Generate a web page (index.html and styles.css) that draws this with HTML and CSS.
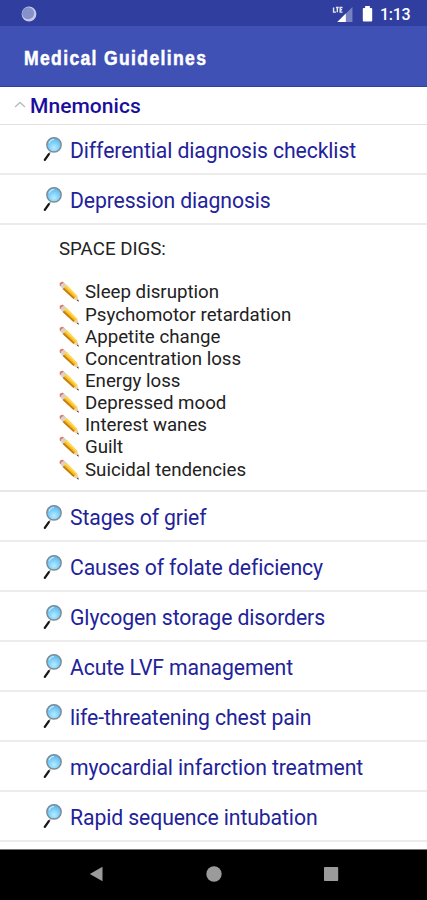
FILE: index.html
```html
<!DOCTYPE html>
<html lang="en">
<head>
<meta charset="utf-8">
<title>Medical Guidelines</title>
<link rel="stylesheet" href="styles.css">
</head>
<body>
<svg class="defs" aria-hidden="true">
  <defs>
    <radialGradient id="glass" cx=".5" cy=".7" r=".65">
      <stop offset="0" stop-color="#b5edff"/><stop offset=".55" stop-color="#80cffa"/><stop offset="1" stop-color="#60b2e8"/>
    </radialGradient>
    <symbol id="lens" viewBox="0 0 20 26">
      <path d="M7.3 16.2 5.6 18.6" stroke="#999" stroke-width="1.6"/>
      <path d="M5.7 18.3 1.8 23.8" stroke="#171717" stroke-width="2.3" stroke-linecap="round"/>
      <circle cx="11" cy="8.8" r="7.2" fill="url(#glass)" stroke="#7c8b92" stroke-width="1.4"/>
      <path d="M6 7.2Q7.5 3.7 11 3.5" fill="none" stroke="#c9eefc" stroke-width="1.1"/>
    </symbol>
    <symbol id="pencil" viewBox="0 0 20 22">
      <path d="M.6 2.4Q1.4.5 3.8.8L6.6 3.2 3 6.6.8 4.2Z" fill="#e47762"/>
      <path d="M2.2 3.2 5 1.7 7.7 4 3.7 8 1.6 5.3Z" fill="#d5d3d0"/>
      <path d="M3.7 8 7.7 4 18.4 15 14.5 18Z" fill="#f5ba20"/>
      <path d="M3.7 8 5 6.7 15.8 17 14.5 18Z" fill="#c67b12"/>
      <path d="M6.3 5.4 7.7 4 18.4 15 17.3 15.9Z" fill="#ffda58"/>
      <path d="M14.5 18 18.4 15 19.6 20.5Z" fill="#efcf9c"/>
      <path d="M17.8 19.5 19.2 18.5 19.7 20.8Z" fill="#333"/>
    </symbol>
  </defs>
</svg>
<div class="screen">
  <div class="status">
    <svg class="sync" viewBox="0 0 16 16"><circle cx="8" cy="8" r="7.4" fill="#c5cae9"/><circle cx="7.1" cy="7.2" r="6" fill="#8690cb"/></svg>
    <svg class="signal" viewBox="0 0 22 18"><path d="M21 1V17H5Z" fill="#7881c3"/><path d="M14 8V17H5Z" fill="#fff"/><path d="M1 1.5V6.5H3.5M3.5 1.5H6.5M5 1.5V6.5M10.5 1.5H8V6.5H10.5M8 4H10" fill="none" stroke="#e5e7f6" stroke-width="1.5"/></svg>
    <svg class="battery" viewBox="0 0 11 17"><path d="M3 0H8V2H9.5Q10.5 2 10.5 3V15.5Q10.5 16.5 9.5 16.5H1.5Q.5 16.5.5 15.5V3Q.5 2 1.5 2H3Z" fill="#fff"/></svg>
    <span class="clock">1:13</span>
  </div>
  <header class="appbar"><h1>Medical Guidelines</h1></header>
  <main class="list">
    <div class="group"><svg class="chevron" viewBox="0 0 12 8"><path d="M1 6 6 1.5 11 6" fill="none" stroke="#bcbcbc" stroke-width="1.4"/></svg><h2>Mnemonics</h2></div>
    <div class="row"><svg class="lens"><use href="#lens"/></svg><span>Differential diagnosis checklist</span></div>
    <div class="row"><svg class="lens"><use href="#lens"/></svg><span>Depression diagnosis</span></div>
    <div class="detail">
      <p>SPACE DIGS:</p>
      <ul>
        <li><svg class="pencil"><use href="#pencil"/></svg><span>Sleep disruption</span></li>
        <li><svg class="pencil"><use href="#pencil"/></svg><span>Psychomotor retardation</span></li>
        <li><svg class="pencil"><use href="#pencil"/></svg><span>Appetite change</span></li>
        <li><svg class="pencil"><use href="#pencil"/></svg><span>Concentration loss</span></li>
        <li><svg class="pencil"><use href="#pencil"/></svg><span>Energy loss</span></li>
        <li><svg class="pencil"><use href="#pencil"/></svg><span>Depressed mood</span></li>
        <li><svg class="pencil"><use href="#pencil"/></svg><span>Interest wanes</span></li>
        <li><svg class="pencil"><use href="#pencil"/></svg><span>Guilt</span></li>
        <li><svg class="pencil"><use href="#pencil"/></svg><span>Suicidal tendencies</span></li>
      </ul>
    </div>
    <div class="row"><svg class="lens"><use href="#lens"/></svg><span>Stages of grief</span></div>
    <div class="row"><svg class="lens"><use href="#lens"/></svg><span>Causes of folate deficiency</span></div>
    <div class="row"><svg class="lens"><use href="#lens"/></svg><span>Glycogen storage disorders</span></div>
    <div class="row"><svg class="lens"><use href="#lens"/></svg><span>Acute LVF management</span></div>
    <div class="row"><svg class="lens"><use href="#lens"/></svg><span>life-threatening chest pain</span></div>
    <div class="row"><svg class="lens"><use href="#lens"/></svg><span>myocardial infarction treatment</span></div>
    <div class="row"><svg class="lens"><use href="#lens"/></svg><span>Rapid sequence intubation</span></div>
  </main>
  <nav class="navbar">
    <svg viewBox="0 0 16 16"><path d="M14.5.8V15.2L1.8 8Z"/></svg>
    <svg viewBox="0 0 16 16"><circle cx="8" cy="8" r="7.7"/></svg>
    <svg viewBox="0 0 16 16"><rect x="1" y="1" width="14.2" height="14" rx=".8"/></svg>
  </nav>
</div>
</body>
</html>
```
FILE: styles.css
```css
* { box-sizing: border-box; }
body { margin: 0; font-family: Roboto, "Liberation Sans", sans-serif; background: #fff; }
h1, h2, p, ul { margin: 0; padding: 0; }
svg { display: block; flex: none; }
.defs { position: absolute; width: 0; height: 0; }
.screen { width: 427px; height: 900px; display: flex; flex-direction: column; overflow: hidden; }
.status { height: 26px; flex: none; background: #303f9f; display: flex; align-items: center; padding: 2px 17px 0 21px; }
.sync { width: 16px; height: 16px; }
.signal { width: 22px; height: 17px; margin-left: auto; }
.battery { width: 11px; height: 16px; margin: 0 7px 0 8px; }
.clock { width: 30px; padding-top: 2px; color: #fff; font-size: 16px; font-weight: 500; line-height: 20px; letter-spacing: -.3px; white-space: nowrap; }
.appbar { height: 61px; flex: none; background: #3f51b5; border-bottom: 1px solid #3040a1; padding: 4px 24px 0; display: flex; align-items: center; }
h1 { font: bold 19.5px/24px "Liberation Sans", sans-serif; color: #fff; letter-spacing: 1.5px; white-space: nowrap; -webkit-text-stroke: .5px #fff; transform: scaleX(.9); transform-origin: left; }
.list { flex: 1; min-height: 0; overflow: hidden; }
.group { height: 38px; display: flex; align-items: center; border-bottom: 1px solid #e2e2e2; padding-left: 14px; }
.chevron { width: 12px; height: 8px; margin: 0 4px 2px 0; }
h2 { font-size: 21px; line-height: 24px; font-weight: 500; color: #1a0f9c; letter-spacing: .05px; }
.row { height: 49.9px; display: flex; align-items: center; border-bottom: 2px solid #ececec; padding: 1px 0 0 43px; font-size: 21.2px; line-height: 26px; letter-spacing: -.1px; color: #22229a; white-space: nowrap; }
.row span { padding-top: 3px; }
.lens { width: 20px; height: 26px; margin-right: 7px; }
.detail { height: 267.6px; border-bottom: 2px solid #e8e8e8; padding: 13px 0 0 59px; font-size: 18.7px; line-height: 22px; color: #222; }
ul { list-style: none; margin-top: 21.6px; }
li { display: flex; height: 22.15px; align-items: center; white-space: nowrap; }
.pencil { width: 20px; height: 22px; margin-right: 6px; }
.navbar { height: 51px; flex: none; background: #000; border-top: 1px solid #777; display: flex; justify-content: space-between; padding: 16px 88px 0; }
.navbar svg { width: 16px; height: 16px; fill: #9b9b9b; }
```
